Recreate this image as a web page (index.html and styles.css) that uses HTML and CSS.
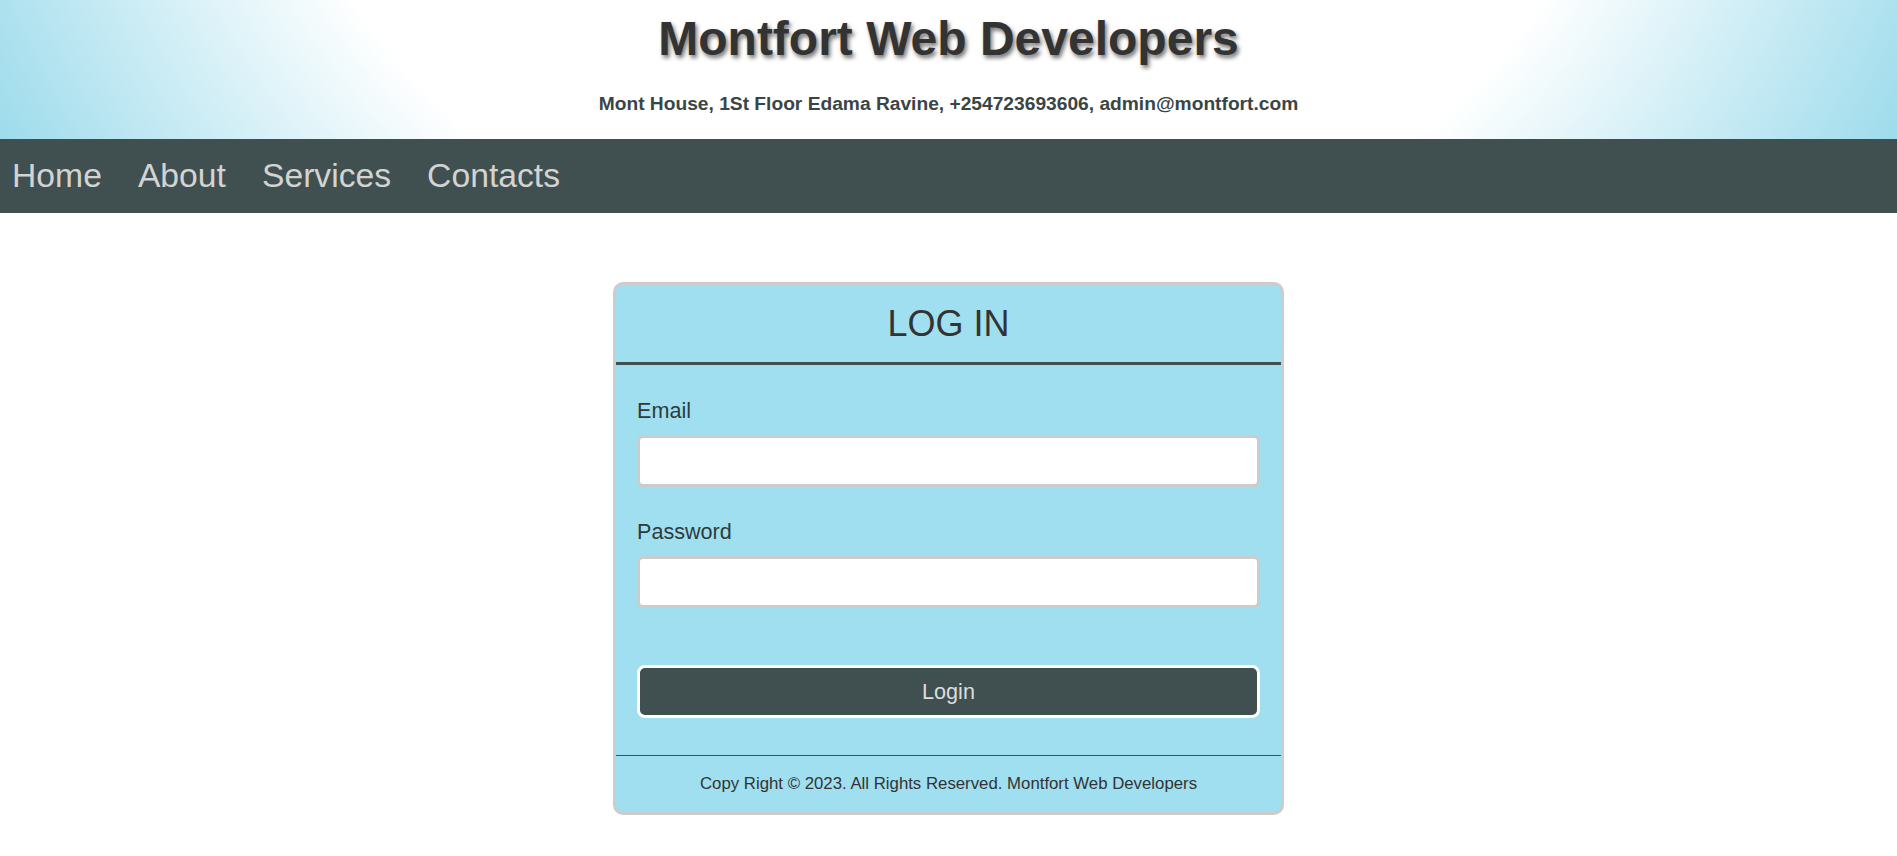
FILE: index.html
```html
<!DOCTYPE html>
<html lang="en">
<head>
<meta charset="utf-8">
<title>Montfort Web Developers - Log In</title>
<link rel="stylesheet" href="styles.css">
</head>
<body>
<header class="site-header">
  <h1 class="site-title">Montfort Web Developers</h1>
  <p class="site-address">Mont House, 1St Floor Edama Ravine, +254723693606, admin@montfort.com</p>
</header>
<nav class="main-nav">
  <a href="#" class="nav-link">Home</a>
  <a href="#" class="nav-link">About</a>
  <a href="#" class="nav-link">Services</a>
  <a href="#" class="nav-link">Contacts</a>
</nav>
<main class="page">
  <section class="login-card">
    <div class="login-head">LOG IN</div>
    <form class="login-form">
      <label class="field-label" for="email">Email</label>
      <input class="field-input" id="email" type="email">
      <label class="field-label second" for="password">Password</label>
      <input class="field-input" id="password" type="password">
      <button type="button" class="login-btn">Login</button>
    </form>
    <div class="login-foot">Copy Right &copy; 2023. All Rights Reserved. Montfort Web Developers</div>
  </section>
</main>
</body>
</html>
```
FILE: styles.css
```css
* { box-sizing: border-box; }
html, body { margin: 0; padding: 0; }
body {
  font-family: "Liberation Sans", Arial, sans-serif;
  background: #ffffff;
  color: #333333;
}
.site-header {
  height: 139px;
  padding-top: 11px;
  text-align: center;
  background: radial-gradient(circle at 50% -400px, #ffffff 715px, #9fdcec 1085px);
}
.site-title {
  margin: 0;
  font-size: 48px;
  line-height: 55px;
  font-weight: bold;
  color: #333333;
  text-shadow: 2px 3px 4px rgba(0, 0, 0, 0.55);
}
.site-address {
  margin: 27px 0 0;
  font-size: 19.2px;
  line-height: 22px;
  font-weight: bold;
  color: #3a4545;
}
.main-nav {
  height: 74px;
  background: #405050;
  display: flex;
  align-items: center;
  gap: 36px;
  padding-left: 12px;
  padding-bottom: 2px;
}
.nav-link {
  font-size: 33.7px;
  color: #d3d3d3;
  text-decoration: none;
}
.page { padding-top: 69px; }
.login-card {
  width: 671px;
  margin: 0 auto;
  background: #a0dff0;
  border: 3px solid #cccccc;
  border-radius: 10px;
}
.login-head {
  height: 80px;
  display: flex;
  align-items: center;
  justify-content: center;
  font-size: 36px;
  color: #333333;
  border-bottom: 3px solid #3f5252;
}
.login-form {
  display: flex;
  flex-direction: column;
  padding: 33px 21px 37px;
}
.field-label {
  font-size: 21.6px;
  line-height: 25px;
  color: #2f3b3b;
  margin-bottom: 12px;
}
.field-label.second { margin-top: 32px; }
.field-input {
  height: 52px;
  border: 3px solid #cccccc;
  border-radius: 6px;
  background: #ffffff;
  width: 100%;
}
.login-btn {
  margin-top: 57px;
  height: 53px;
  border: 3px solid #ffffff;
  border-radius: 8px;
  background: #405050;
  color: #dddddd;
  font-family: "Liberation Sans", Arial, sans-serif;
  font-size: 21.6px;
}
.login-foot {
  border-top: 1px solid #3f5252;
  height: 57px;
  display: flex;
  align-items: center;
  justify-content: center;
  font-size: 16.8px;
  color: #333333;
}
```
